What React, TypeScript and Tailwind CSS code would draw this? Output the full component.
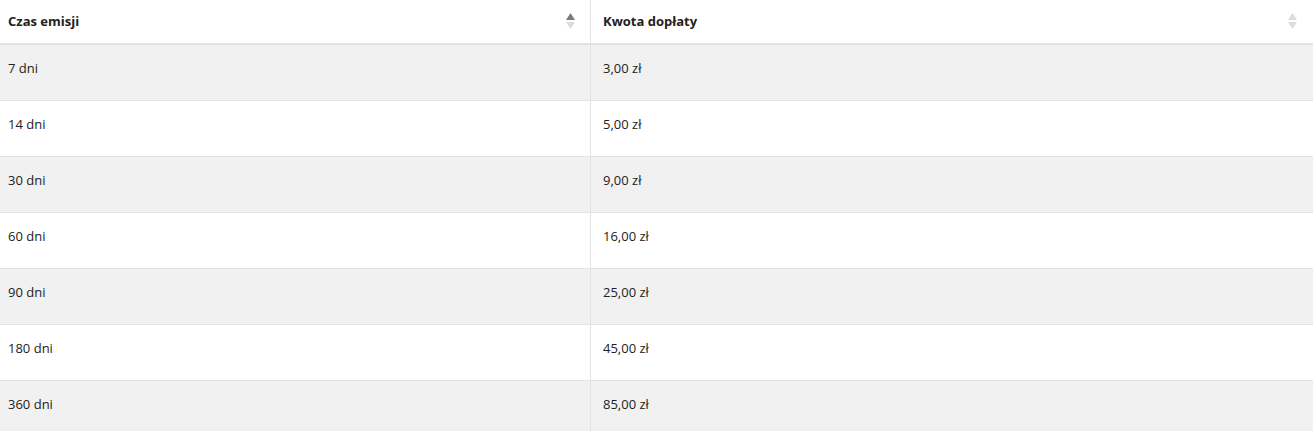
const rows = [
    ['7 dni', '3,00 zł'],
    ['14 dni', '5,00 zł'],
    ['30 dni', '9,00 zł'],
    ['60 dni', '16,00 zł'],
    ['90 dni', '25,00 zł'],
    ['180 dni', '45,00 zł'],
    ['360 dni', '85,00 zł'],
];

function SortIcon({active}: { active?: boolean }) {
    return (
        <svg width="9" height="17" viewBox="0 0 9 17" className="shrink-0">
            <path d="M4.5 0 L9 7 L0 7 Z" fill={active ? '#7a7a7a' : '#dcdcdc'}/>
            <path d="M0 9 L9 9 L4.5 16 Z" fill="#dcdcdc"/>
        </svg>
    )
}

export default function App() {
    return (
        <div className="w-[1313px] h-[431px] overflow-hidden bg-white text-[13px] text-[#222]"
             style={{fontFamily: '"Open Sans", "Noto Sans", sans-serif'}}>
            <div className="flex h-[45px] border-b-2 border-[#e1e2e4]">
                <div className="w-[591px] flex items-center justify-between pl-2 pr-[15px] border-r border-[#e3e3e3]">
                    <span className="font-bold">Czas emisji</span>
                    <SortIcon active/>
                </div>
                <div className="flex-1 flex items-center justify-between pl-[12px] pr-[16px]">
                    <span className="font-bold">Kwota dopłaty</span>
                    <SortIcon/>
                </div>
            </div>
            {rows.map((r, i) => (
                <div key={r[0]}
                     className={'flex h-[56px] border-b border-[#e3e3e3] ' + (i % 2 === 0 ? 'bg-[#f1f1f1]' : 'bg-white')}>
                    <div className="w-[591px] pl-2 pt-[14px] border-r border-[#e3e3e3]">{r[0]}</div>
                    <div className="flex-1 pl-[12px] pt-[14px]">{r[1]}</div>
                </div>
            ))}
        </div>
    )
}
